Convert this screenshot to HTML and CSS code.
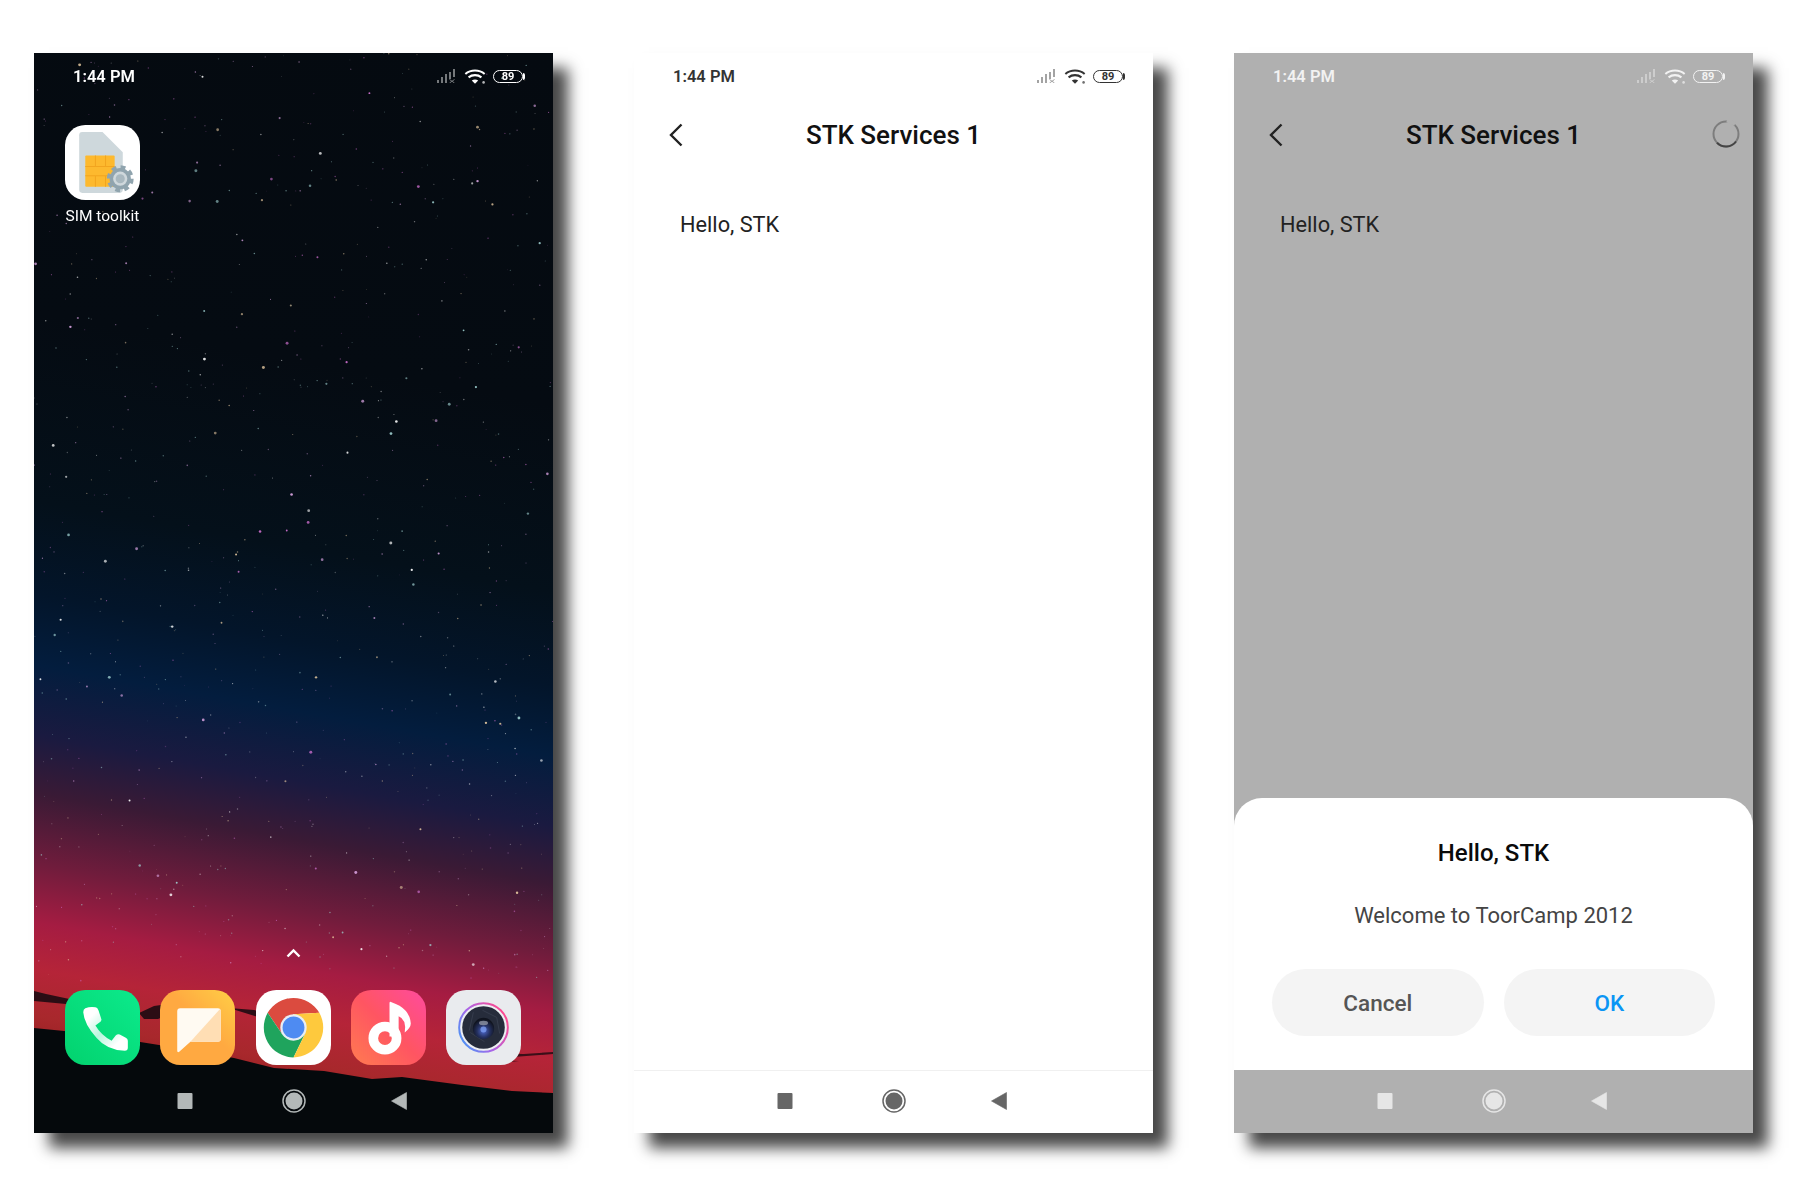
FILE: index.html
```html
<!DOCTYPE html>
<html lang="en">
<head>
    <meta charset="UTF-8">
    <title>SIM toolkit screens</title>
    <link rel="stylesheet" href="styles.css">
</head>
<body>
    <svg class="defs" width="0" height="0">
        <defs>
            <symbol id="signal" viewBox="0 0 20 14">
                <rect x="0" y="11" width="2" height="3" opacity=".45"/>
                <rect x="4" y="8" width="2" height="6" opacity=".45"/>
                <rect x="8" y="5" width="2" height="9" opacity=".45"/>
                <rect x="12" y="3" width="2" height="7" opacity=".45"/>
                <rect x="16" y="0" width="2" height="8" opacity=".45"/>
                <path d="M12.500 10.500l5 3.500M17.500 10.500l-5 3.500" stroke="currentColor" stroke-width="1" opacity=".45"/>
            </symbol>
            <symbol id="wifi" viewBox="0 0 20 14">
                <path d="M1 4.600C6 .4 14 .4 19 4.600" fill="none" stroke="currentColor" stroke-width="1.900"/>
                <path d="M4 7.800C7.500 5 12.500 5 16 7.800" fill="none" stroke="currentColor" stroke-width="1.900"/>
                <path d="M7 10.800C8.800 9.500 11.200 9.500 13 10.800L10 13.800z"/>
                <circle cx="18" cy="12.500" r="1.200" opacity=".7"/>
            </symbol>
            <symbol id="back" viewBox="0 0 14 24">
                <path d="M12.500 1.500L2 12l10.500 10.500" fill="none" stroke="currentColor" stroke-width="2.400"/>
            </symbol>
            <symbol id="nav-square" viewBox="0 0 16 16">
                <rect x=".5" y="0" width="15" height="16" rx="1"/>
            </symbol>
            <symbol id="nav-home" viewBox="0 0 24 24">
                <circle cx="12" cy="12" r="11" fill="none" stroke="currentColor" stroke-width="1.500"/>
                <circle cx="12" cy="12" r="8.500"/>
            </symbol>
            <symbol id="nav-back" viewBox="0 0 16 18">
                <path d="M15.500.5v17L.5 9z" stroke="currentColor" stroke-linejoin="round" stroke-width=".6"/>
            </symbol>
            <linearGradient id="g-phone" x1="0" y1="1" x2="1" y2="0">
                <stop offset="0" stop-color="#02d26e"/>
                <stop offset="1" stop-color="#0cea8c"/>
            </linearGradient>
            <linearGradient id="g-handset" x1="0" y1="0" x2="1" y2="1">
                <stop offset=".2" stop-color="#fff"/>
                <stop offset=".5" stop-color="#b8f6de"/>
                <stop offset=".8" stop-color="#fff"/>
            </linearGradient>
            <linearGradient id="g-notes" x1="0" y1="1" x2="1" y2="0">
                <stop offset=".55" stop-color="#ffa941"/>
                <stop offset="1" stop-color="#ffcf46"/>
            </linearGradient>
            <linearGradient id="g-music" x1="0" y1="1" x2="1" y2="0">
                <stop offset="0" stop-color="#ff7b50"/>
                <stop offset=".5" stop-color="#ff5562"/>
                <stop offset="1" stop-color="#ff4b9e"/>
            </linearGradient>
            <linearGradient id="g-ring" x1="0" y1=".9" x2="1" y2=".3">
                <stop offset="0" stop-color="#3c9cf5"/>
                <stop offset=".45" stop-color="#a766ea"/>
                <stop offset="1" stop-color="#ff4a8e"/>
            </linearGradient>
            <radialGradient id="g-lens" cx=".5" cy=".62" r=".55">
                <stop offset="0" stop-color="#4f6ad0"/>
                <stop offset=".55" stop-color="#24305f"/>
                <stop offset="1" stop-color="#10141f"/>
            </radialGradient>
        </defs>
    </svg>

    <main class="screens">
        <!-- home screen -->
        <section class="phone phone-home">
            <canvas class="stars" id="stars" width="519" height="1080"></canvas>
            <svg class="land" viewBox="0 0 519 1080" aria-hidden="true">
                <path d="M0 938l12 3 14 3 14 3 6 3-14 1-32-3zM105 960l15-7 14-2 16 5-14 5-12 5-14 0zM195 955l25 2 22 6-18 1z" fill="#14090f" opacity=".85"/>
                <path d="M430 1000l60 1 29-2v2l-40 3zM445 1007l40 1-20 2z" fill="#1d0a10" opacity=".8"/>
                <path d="M0 975l40 4 60 9 50 8 50 9 40 10 50 3 48 8 30-2 60 8 50 6 41 2v40H0z" fill="#05090c"/>
            </svg>

            <header class="status">
                <span class="time">1:44 PM</span>
                <div class="status-icons">
                    <svg class="ic-signal"><use href="#signal"/></svg>
                    <svg class="ic-wifi"><use href="#wifi"/></svg>
                    <span class="battery">89</span>
                </div>
            </header>

            <div class="app-grid">
                <div class="app">
                    <svg class="app-icon" viewBox="0 0 74 74">
                        <rect width="74" height="74" rx="20" fill="#fff"/>
                        <path d="M17 7h20l20 20v37q0 3-3 3H17q-3 0-3-3V10q0-3 3-3z" fill="#ced8dc"/>
                        <rect x="20" y="30" width="29" height="31" rx="1" fill="#fdb92e"/>
                        <path d="M20 41h29M20 50h29M30 30v11M40 30v11M30 50v11M40 50v11" stroke="#f2a51f" stroke-width="1"/>
                        <circle cx="54.500" cy="53" r="10.500" fill="#90a4ae"/>
                        <circle cx="54.500" cy="53" r="11" fill="none" stroke="#90a4ae" stroke-width="4.500" stroke-dasharray="4.600 4.040"/>
                        <circle cx="54.500" cy="53" r="7" fill="#cfd8dc"/>
                        <circle cx="54.500" cy="53" r="4.500" fill="#a9b8bf"/>
                    </svg>
                    <span class="app-label">SIM toolkit</span>
                </div>
            </div>

            <div class="swipe-up">
                <svg width="15" height="10" viewBox="0 0 15 10"><path d="M1.500 8.500l6-6 6 6" fill="none" stroke="#fff" stroke-width="2.400"/></svg>
            </div>

            <div class="app-grid dock">
                <svg class="app-icon" viewBox="0 0 74 74">
                    <rect width="74" height="74" rx="20" fill="url(#g-phone)"/>
                    <path d="M20 18q5-2 10-1 2 0 3 3l3 9q0 2-2 3l-4 3q6 10 16 15l4-5q2-2 4-1l6 3q2 1 2 3v7q0 3-3 3-18-1-28-13-12-13-13-25 0-3 2-4z" fill="url(#g-handset)"/>
                </svg>
                <svg class="app-icon" viewBox="0 0 74 74">
                    <rect width="74" height="74" rx="20" fill="url(#g-notes)"/>
                    <path d="M20 18h37q3 0 3 3v27q0 3-3 3H30L19 61q-2 1-2-1V21q0-3 3-3z" fill="#fffaf2"/>
                    <path d="M59 19q1 1 1 2v27q0 3-3 3H30z" fill="#ffdeb4"/>
                </svg>
                <svg class="app-icon" viewBox="0 0 74 74">
                    <rect width="74" height="74" rx="20" fill="#fff"/>
                    <path d="M11.500 22.500A29.500 29.500 0 0 1 62.500 22.500L37 24 25.700 43.500z" fill="#db4b3f"/>
                    <path d="M11.500 22.500L25.700 43.500 37 37 48.300 43.500 37 66.500A29.500 29.500 0 0 1 11.500 22.500z" fill="#1fa45d"/>
                    <path d="M37 66.500L48.300 43.500 37 24 62.500 22.500A29.500 29.500 0 0 1 37 66.500z" fill="#fec93d"/>
                    <circle cx="37" cy="37" r="13" fill="#e8edf4"/>
                    <circle cx="37" cy="37" r="10.800" fill="#4e8bf2"/>
                </svg>
                <svg class="app-icon" viewBox="0 0 74 74">
                    <rect width="74" height="74" rx="20" fill="url(#g-music)"/>
                    <circle cx="33.500" cy="47.500" r="11.500" fill="none" stroke="#fff" stroke-width="9.500"/>
                    <path d="M38 46V13q0-2 2-1 18 6 19 21 0 4-6 9 2-13-6-16v20z" fill="#fff"/>
                </svg>
                <svg class="app-icon" viewBox="0 0 74 74">
                    <rect width="74" height="74" rx="20" fill="#e9ebee"/>
                    <circle cx="37" cy="37" r="24" fill="none" stroke="url(#g-ring)" stroke-width="2"/>
                    <circle cx="37" cy="37" r="22.500" fill="#eef0f3"/>
                    <circle cx="37" cy="37" r="21" fill="#262c3b"/>
                    <path d="M24 42l14 9M27 22l-4 18M50 27l-14-7M53 43l-3-16" stroke="#3c4354" stroke-width=".7"/>
                    <circle cx="37" cy="38" r="10.500" fill="url(#g-lens)"/>
                    <circle cx="37" cy="39" r="3" fill="#7b9cf0" opacity=".8"/>
                    <ellipse cx="37" cy="32.500" rx="4.500" ry="2.200" fill="#8e95a5" opacity=".8"/>
                </svg>
            </div>

            <nav class="nav">
                <svg class="nav-square"><use href="#nav-square"/></svg>
                <svg class="nav-home"><use href="#nav-home"/></svg>
                <svg class="nav-back"><use href="#nav-back"/></svg>
            </nav>
        </section>

        <!-- STK menu -->
        <section class="phone phone-light">
            <header class="status">
                <span class="time">1:44 PM</span>
                <div class="status-icons">
                    <svg class="ic-signal"><use href="#signal"/></svg>
                    <svg class="ic-wifi"><use href="#wifi"/></svg>
                    <span class="battery">89</span>
                </div>
            </header>
            <div class="toolbar">
                <svg class="ic-back"><use href="#back"/></svg>
                <h1 class="title">STK Services 1</h1>
                <div class="toolbar-end"></div>
            </div>
            <div class="content">
                <p class="menu-text">Hello, STK</p>
            </div>
            <nav class="nav">
                <svg class="nav-square"><use href="#nav-square"/></svg>
                <svg class="nav-home"><use href="#nav-home"/></svg>
                <svg class="nav-back"><use href="#nav-back"/></svg>
            </nav>
        </section>

        <!-- STK menu with the dialog open -->
        <section class="phone phone-dim">
            <header class="status">
                <span class="time">1:44 PM</span>
                <div class="status-icons">
                    <svg class="ic-signal"><use href="#signal"/></svg>
                    <svg class="ic-wifi"><use href="#wifi"/></svg>
                    <span class="battery">89</span>
                </div>
            </header>
            <div class="toolbar">
                <svg class="ic-back"><use href="#back"/></svg>
                <h1 class="title">STK Services 1</h1>
                <div class="toolbar-end">
                    <svg class="spinner" viewBox="0 0 28 28">
                        <circle cx="14" cy="14" r="12.500" fill="none" stroke="#7d7d7d" stroke-width="2"/>
                        <path d="M5 22.700A12.500 12.500 0 0 0 24 21.500" fill="none" stroke="#444" stroke-width="2"/>
                        <path d="M15 .5L23 4" stroke="#b0b0b0" stroke-width="4"/>
                    </svg>
                </div>
            </div>
            <div class="content">
                <p class="menu-text">Hello, STK</p>
                <div class="dialog">
                    <h2 class="dialog-title">Hello, STK</h2>
                    <p class="dialog-text">Welcome to ToorCamp 2012</p>
                    <div class="dialog-buttons">
                        <button class="btn">Cancel</button>
                        <button class="btn btn-ok">OK</button>
                    </div>
                </div>
            </div>
            <nav class="nav">
                <svg class="nav-square"><use href="#nav-square"/></svg>
                <svg class="nav-home"><use href="#nav-home"/></svg>
                <svg class="nav-back"><use href="#nav-back"/></svg>
            </nav>
        </section>
    </main>

    <script src="script.js"></script>
</body>
</html>
```

FILE: styles.css
```css
body {
    margin: 0;
    background-color: #fff;
    font-family: Roboto, "Liberation Sans", sans-serif;
}
.defs {
    position: absolute;
}
.screens {
    display: flex;
    gap: 81px;
    padding: 53px 0 67px 34px;
}
.phone {
    position: relative;
    display: flex;
    flex-direction: column;
    flex: none;
    width: 519px;
    height: 1080px;
    box-shadow: 15px 15px 14px rgba(0, 0, 0, 0.72);
}

/* home screen wallpaper */
.phone-home {
    color: #fff;
    background: linear-gradient(190deg,
        #050a10 0, #050b12 30%, #04101a 46%, #03152a 54%, #031d3e 60%, #1a1a40 66%,
        #3a1a35 71%, #701c3c 77%, #a51c42 82%, #b52438 86%, #a8282c 90%, #861618 96%, #701214 100%);
}
.stars,
.land {
    position: absolute;
    top: 0;
    left: 0;
    width: 519px;
    height: 1080px;
}
.phone-home > header,
.phone-home > div,
.phone-home > nav {
    position: relative;
}

.phone-light {
    color: #333;
    background-color: #fff;
}
.phone-dim {
    color: #f2f2f2;
    background-color: #b0b0b0;
}

/* status bar */
.status {
    display: flex;
    justify-content: space-between;
    align-items: center;
    flex: none;
    height: 46px;
    padding: 0 28px 0 39px;
}
.time {
    font-size: 16.500px;
    font-weight: 600;
}
.status-icons {
    display: flex;
    align-items: center;
    gap: 7px;
}
.ic-signal {
    width: 20px;
    height: 14px;
    fill: currentColor;
}
.ic-wifi {
    width: 22px;
    height: 15px;
    fill: currentColor;
}
.battery {
    position: relative;
    width: 28px;
    height: 11px;
    margin-right: 2px;
    border: 1.5px solid currentColor;
    border-radius: 7px;
    font-size: 11px;
    font-weight: 700;
    line-height: 11px;
    text-align: center;
}
.battery::after {
    content: "";
    position: absolute;
    top: 2px;
    right: -3px;
    width: 2px;
    height: 7px;
    border-radius: 0 3px 3px 0;
    background-color: currentColor;
}

/* app bar */
.toolbar {
    display: flex;
    align-items: center;
    flex: none;
    height: 72px;
    color: #111;
}
.ic-back {
    flex: none;
    width: 14px;
    height: 24px;
    margin: 0 37px 0 35px;
    color: #222;
}
.title {
    flex: 1;
    margin: 0;
    font-size: 26px;
    font-weight: 500;
    text-align: center;
}
.toolbar-end {
    display: flex;
    justify-content: flex-end;
    flex: none;
    width: 86px;
    padding-right: 13px;
    box-sizing: border-box;
}
.spinner {
    width: 28px;
    height: 28px;
    margin-top: -2px;
}
.content {
    display: flex;
    flex-direction: column;
    flex: 1;
}
.menu-text {
    margin: 40px 0 0 46px;
    color: #222;
    font-size: 21.750px;
    line-height: 28px;
}

/* dialog */
.dialog {
    margin-top: auto;
    padding: 40px 38px 34px;
    border-radius: 28px 28px 0 0;
    background-color: #fff;
    text-align: center;
}
.dialog-title {
    margin: 0;
    color: #0a0a0a;
    font-size: 24px;
    font-weight: 500;
    line-height: 30px;
}
.dialog-text {
    margin: 33px 0 0;
    color: #444;
    font-size: 22px;
    line-height: 30px;
}
.dialog-buttons {
    display: flex;
    gap: 20px;
    margin-top: 38px;
}
.btn {
    flex: 1;
    height: 67px;
    border: none;
    border-radius: 34px;
    background-color: #f4f4f4;
    color: #555;
    font-family: inherit;
    font-size: 22.500px;
    font-weight: 500;
}
.btn-ok {
    color: #0a95f5;
}

/* home icons */
.app-grid {
    display: grid;
    grid-template-columns: repeat(5, 95.25px);
    justify-content: center;
    justify-items: center;
    flex: none;
    margin-left: -1px;
    padding-top: 26px;
}
.app {
    display: flex;
    flex-direction: column;
    align-items: center;
}
.app-icon {
    width: 75px;
    height: 75px;
}
.app-label {
    margin-top: 6px;
    font-size: 15.500px;
    line-height: 20px;
    white-space: nowrap;
}
.swipe-up {
    display: flex;
    justify-content: center;
    margin-top: auto;
    margin-bottom: 32px;
    line-height: 0;
}
.dock {
    padding-top: 0;
}

/* navigation bar */
.nav {
    display: grid;
    grid-template-columns: repeat(3, 107px);
    justify-content: center;
    justify-items: center;
    align-items: center;
    flex: none;
    box-sizing: border-box;
    height: 63px;
    padding-bottom: 2px;
    margin-top: auto;
}
.dock + .nav {
    margin-top: 5px;
}
.nav-square {
    width: 16px;
    height: 16px;
    margin-right: 3px;
    fill: currentColor;
}
.nav-home {
    width: 24px;
    height: 24px;
    fill: currentColor;
}
.nav-back {
    width: 16px;
    height: 18px;
    margin-right: 3px;
    fill: currentColor;
}
.phone-home .nav {
    color: #b3b8b8;
}
.phone-light .nav {
    border-top: 1px solid #f0f0f0;
    color: #666;
}
.phone-dim .nav {
    color: #e6e6e6;
}
```

FILE: script.js
```js
// sprinkle the stars over the wallpaper, same seed every time
var canvas = document.getElementById('stars');
var ctx = canvas.getContext('2d');
var seed = 20120;

function rnd() {
    seed = (seed * 1664525 + 1013904223) % 4294967296;
    return seed / 4294967296;
}

var colors = ['#ffffff', '#e0a8e8', '#d070d0', '#e6c9a0', '#9fd0d0'];

for (var i = 0; i < 850; i++) {
    var x = rnd() * 519;
    var y = rnd() * 930;
    var big = rnd() > 0.9;
    var r = big ? 0.9 + rnd() * 0.6 : 0.4 + rnd() * 0.4;
    ctx.globalAlpha = (big ? 0.55 : 0.25) + rnd() * 0.4;
    ctx.fillStyle = colors[Math.floor(rnd() * colors.length)];
    ctx.beginPath();
    ctx.arc(x, y, r, 0, Math.PI * 2);
    ctx.fill();
}
```
